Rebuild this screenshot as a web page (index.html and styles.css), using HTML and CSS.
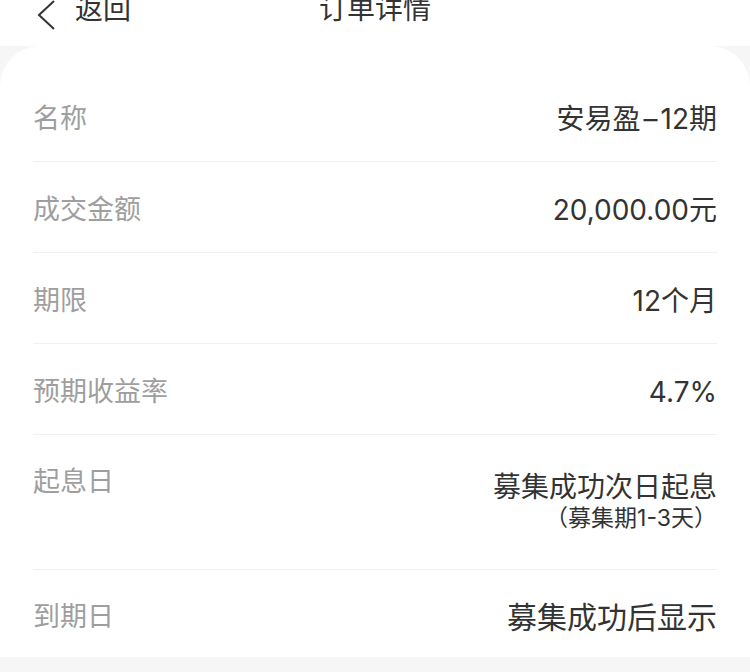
FILE: index.html
```html
<!DOCTYPE html>
<html lang="zh-CN">
<head>
    <meta charset="UTF-8">
    <meta name="viewport" content="width=device-width, initial-scale=1.0">
    <title>订单详情</title>
    <link rel="stylesheet" href="styles.css">
</head>
<body>
    <div class="nav">
        <div class="nav-bar">
            <a class="back" href="#">
                <svg class="back-icon" width="22" height="30" viewBox="0 0 22 30">
                    <path d="M19 1 L4 15 L19 29" fill="none" stroke="#333" stroke-width="2"/>
                </svg>
                <span>返回</span>
            </a>
            <h1 class="title">订单详情</h1>
            <span></span>
        </div>
    </div>

    <div class="card">
        <div class="row">
            <span class="label">名称</span>
            <span class="value">安易盈<span class="dash">–</span>12期</span>
        </div>
        <div class="row">
            <span class="label">成交金额</span>
            <span class="value">20,000.00元</span>
        </div>
        <div class="row">
            <span class="label">期限</span>
            <span class="value">12个月</span>
        </div>
        <div class="row">
            <span class="label">预期收益率</span>
            <span class="value">4.7%</span>
        </div>
        <div class="row row-tall">
            <span class="label">起息日</span>
            <div class="value-group">
                <span class="value">募集成功次日起息</span>
                <span class="value-note">（募集期1-3天）</span>
            </div>
        </div>
        <div class="row row-last">
            <span class="label">到期日</span>
            <span class="value value-lg">募集成功后显示</span>
        </div>
    </div>
</body>
</html>
```

FILE: styles.css
```css
* {
    padding: 0;
    margin: 0;
    box-sizing: border-box;
    font-family: Inter, "Noto Sans CJK SC", sans-serif;
}
body {
    background: #f6f6f6;
    width: 750px;
    height: 672px;
    overflow: hidden;
    color: #333;
}
.nav {
    height: 46px;
    background: #fff;
    overflow: hidden;
}
.nav-bar {
    display: grid;
    grid-template-columns: 1fr auto 1fr;
    align-items: center;
    height: 40px;
    margin-top: -12px;
    padding: 0 35px;
}
.back {
    display: flex;
    align-items: center;
    gap: 18px;
    color: #333;
    text-decoration: none;
    font-size: 28px;
    line-height: 40px;
}
.back-icon {
    margin-top: 12px;
}
.title {
    font-size: 28px;
    font-weight: normal;
    line-height: 40px;
    color: #333;
}
.card {
    background: #fff;
    border-radius: 40px 40px 0 0;
    padding: 25px 33px 0;
    height: 611px;
}
.row {
    display: flex;
    justify-content: space-between;
    align-items: center;
    height: 91px;
    padding-top: 6px;
    border-bottom: 1px solid #f1f1f1;
}
.row-tall {
    height: 135px;
    align-items: flex-start;
    padding-top: 32px;
}
.row-last {
    border-bottom: none;
    height: 88px;
}
.label {
    font-size: 27px;
    line-height: 30px;
    color: #9e9e9e;
}
.value {
    font-size: 28px;
    line-height: 30px;
    color: #333;
}
.dash {
    margin: 0 3px;
}
.value-lg {
    font-size: 30px;
}
.value-group {
    display: flex;
    flex-direction: column;
    align-items: flex-end;
    padding-top: 5px;
}
.value-note {
    font-size: 23px;
    line-height: 32px;
    color: #333;
}
```
